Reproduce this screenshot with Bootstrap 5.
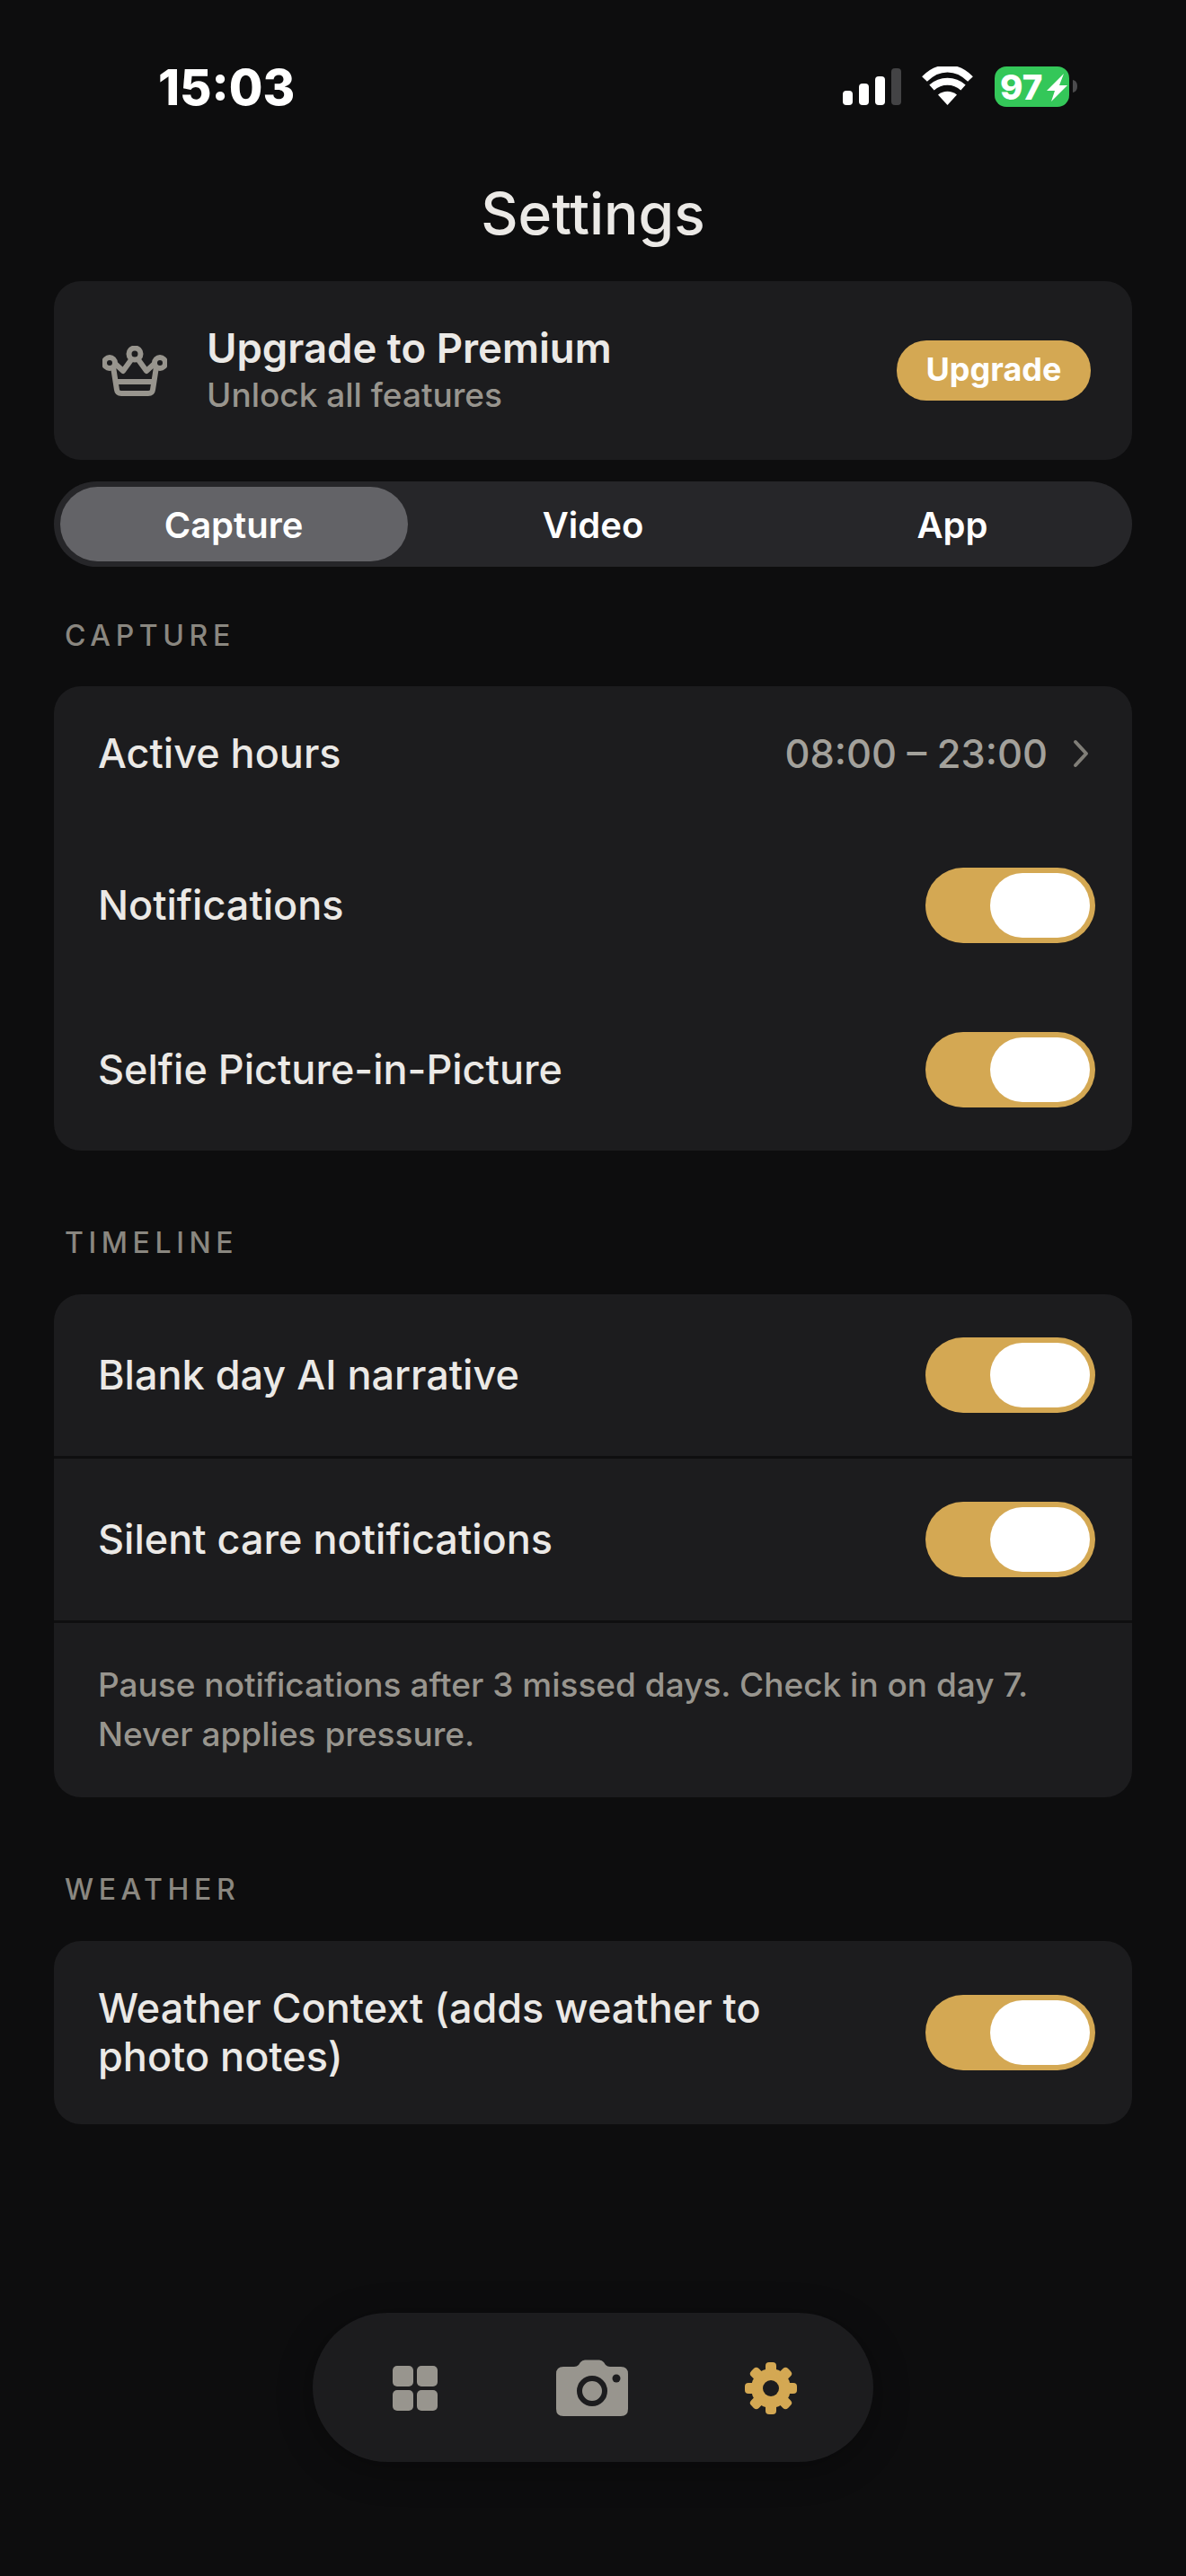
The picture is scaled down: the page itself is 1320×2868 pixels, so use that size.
<!doctype html>
<html lang="en"><head><meta charset="utf-8"><title>Settings</title>
<link href="https://cdn.jsdelivr.net/npm/bootstrap@5.3.0/dist/css/bootstrap.min.css" rel="stylesheet">
<style>
html,body{background:#0d0d0e;}
body{font-family:Inter,"Liberation Sans",sans-serif;color:#ebe9e6;width:1320px;height:2868px;overflow:hidden;}
.scr{padding:0 60px;}
.stat{height:190px;padding:0 0 0 116px;margin:0 -60px 0 0;}
.clock{font-size:54.5px;font-weight:800;color:#fff;line-height:64px;margin-top:65px;}
.staticons{margin:74px 120px 0 0;}
.ttl{font-size:64px;font-weight:500;line-height:76px;text-align:center;margin:10px 0 37px;}
.sheet{background:#1c1c1e;border-radius:30px;}
.promo{height:199px;padding:0 46px 0 54px;gap:44px;margin-bottom:24px;}
.pname{font-size:45.5px;font-weight:600;line-height:56px;margin-top:-2px;}
.psub{font-size:37px;font-weight:500;color:#98958e;line-height:46px;margin-top:1px;}
.ubtn{background:#d4a853;color:#fff;border:0;border-radius:33px;width:216px;height:67px;font-size:36px;font-weight:700;padding:0 0 2px;margin-top:-1px;}
.seg{height:95px;border-radius:48px;background:#262629;padding:6px 0;}
.segi{flex:1 1 0;padding:0 6.500px;display:flex;}
.segb{flex:1;border:0;background:none;color:#fff;font-size:40px;font-weight:600;border-radius:42px;padding:2px 0 0;}
.segb.on{background:#636367;}
.cap{font-size:32px;font-weight:500;letter-spacing:5.6px;color:#8a8780;line-height:40px;padding-left:12px;margin:83px 0 37px;}
.cap.first{margin-top:57px;margin-bottom:36px;}
.rw{padding:48px 41px 48px 49px;}
.rw.hrs{padding:48px 48px 49px 49px;}
.rw.lbl{min-height:180px;}
.rw.sep{border-top:3px solid #0f0f10;}
.rw.quiet{border-top:3px solid #1c1c1e;}
.rt{font-size:45px;font-weight:500;line-height:54px;}
.rv{font-size:43.4px;font-weight:500;color:#a3a19b;line-height:54px;}
.sw{width:189px;height:84px;border-radius:42px;background:#d4a853;padding:6px;flex:none;display:flex;justify-content:flex-end;}
.knob{width:111px;height:72px;border-radius:36px;background:#fff;}
.nt{font-size:37px;font-weight:500;color:#98958e;line-height:55px;padding:41px 49px 43px;border-top:3px solid #0f0f10;}
.dock{width:624px;height:166px;border-radius:83px;background:#1c1c1e;margin:210px auto 0;padding:2px 85px 0 88px;box-shadow:0 8px 40px rgba(0,0,0,.3);}
svg{display:block;flex:none;}
</style></head>
<body>
<div class="scr">
  <div class="stat d-flex justify-content-between align-items-start">
    <div class="clock">15:03</div>
    <div class="staticons d-flex align-items-start" >
      <svg width="262" height="46" viewBox="0 0 262 46">
        <g transform="translate(-937,-74)">
          <rect x="937" y="101" width="11" height="16" rx="4" fill="#fff"/>
          <rect x="955" y="93" width="11" height="24" rx="4" fill="#fff"/>
          <rect x="973" y="85" width="11" height="32" rx="4" fill="#fff"/>
          <rect x="991" y="76" width="11" height="41" rx="4" fill="#434345"/>
          <path d="M1053.5 117 L1043 105.5 C1049 100.5 1058 100.5 1064 105.5 Z" fill="#fff"/>
          <path d="M1036 97.5 C1046 88.5 1061 88.5 1071 97.5" fill="none" stroke="#fff" stroke-width="8"/>
          <path d="M1028 88 C1043 72.5 1064 72.5 1079 88" fill="none" stroke="#fff" stroke-width="8" />
          <rect x="1106" y="74" width="83" height="45" rx="13" fill="#34c759"/>
          <path d="M1193 89 C1197 90 1198 93 1198 96 C1198 99 1197 102 1193 103 Z" fill="#4b4b4d"/>
          <text x="1112" y="111" font-family="Inter,sans-serif" font-weight="800" font-size="38.500" fill="#fff">97</text>
          <path d="M1183 82 L1164 101 L1173 101 L1169 113 L1187 95 L1178 95 Z" fill="#fff"/>
        </g>
      </svg>
    </div>
  </div>
  <div class="ttl">Settings</div>

  <div class="sheet promo d-flex align-items-center">
    <svg width="72" height="56" viewBox="0 0 72 56" fill="none" stroke="#98958e" stroke-width="6" stroke-linejoin="round" stroke-linecap="round">
      <path d="M11 17 L16 49 Q16.500 53 21 53 L51 53 Q55.500 53 56 49 L61 17 L49 28 L36 10 L23 28 Z"/>
      <path d="M15 40 H57"/>
      <circle cx="36" cy="9" r="6.500" fill="#1c1c1e"/>
      <circle cx="8" cy="19" r="6" fill="#1c1c1e"/>
      <circle cx="64" cy="19" r="6" fill="#1c1c1e"/>
    </svg>
    <div class="flex-grow-1">
      <div class="pname">Upgrade to Premium</div>
      <div class="psub">Unlock all features</div>
    </div>
    <button class="ubtn" type="button">Upgrade</button>
  </div>

  <div class="seg d-flex">
    <div class="segi"><button class="segb on" type="button">Capture</button></div>
    <div class="segi"><button class="segb" type="button">Video</button></div>
    <div class="segi"><button class="segb" type="button">App</button></div>
  </div>

  <div class="cap first">CAPTURE</div>
  <div class="sheet">
    <div class="rw hrs d-flex justify-content-between align-items-center">
      <div class="rt">Active hours</div>
      <div class="d-flex align-items-center gap-4">
        <span class="rv">08:00 – 23:00</span>
        <svg class="ms-1" width="18" height="32" viewBox="0 0 18 32" fill="none" stroke="#807e78" stroke-width="4" stroke-linecap="round" stroke-linejoin="round"><path d="M3 3 L15 16 L3 29"/></svg>
      </div>
    </div>
    <div class="rw lbl quiet d-flex justify-content-between align-items-center"><div class="rt">Notifications</div><div class="sw"><div class="knob"></div></div></div>
    <div class="rw lbl quiet d-flex justify-content-between align-items-center"><div class="rt">Selfie Picture-in-Picture</div><div class="sw"><div class="knob"></div></div></div>
  </div>

  <div class="cap">TIMELINE</div>
  <div class="sheet">
    <div class="rw lbl d-flex justify-content-between align-items-center"><div class="rt">Blank day AI narrative</div><div class="sw"><div class="knob"></div></div></div>
    <div class="rw lbl sep d-flex justify-content-between align-items-center"><div class="rt">Silent care notifications</div><div class="sw"><div class="knob"></div></div></div>
    <div class="nt">Pause notifications after 3 missed days. Check in on day 7.<br>Never applies pressure.</div>
  </div>

  <div class="cap">WEATHER</div>
  <div class="sheet">
    <div class="rw d-flex justify-content-between align-items-center">
      <div class="rt">Weather Context (adds weather to<br>photo notes)</div>
      <div class="sw"><div class="knob"></div></div>
    </div>
  </div>

  <div class="dock d-flex justify-content-between align-items-center">
    <svg width="52" height="52" viewBox="0 0 52 52" fill="#98958e"><rect x="1" y="1" width="23" height="23" rx="5"/><rect x="28" y="1" width="23" height="23" rx="5"/><rect x="1" y="28" width="23" height="23" rx="5"/><rect x="28" y="28" width="23" height="23" rx="5"/></svg>
    <svg width="80" height="64" viewBox="0 0 80 64"><path fill="#98958e" d="M8 8 H20 Q23 8 25 6 L27 3 Q29 0.500 32 0.500 H48 Q51 0.500 53 3 L55 6 Q57 8 60 8 H72 Q80 8 80 16 V55 Q80 63 72 63 H8 Q0 63 0 55 V16 Q0 8 8 8 Z"/><circle cx="40" cy="35" r="14" fill="none" stroke="#1c1c1e" stroke-width="6"/><circle cx="67" cy="21" r="4.500" fill="#1c1c1e"/></svg>
    <svg width="58" height="58" viewBox="0 0 58 58"><g fill="#d4a853"><circle cx="29" cy="29" r="22"/><g><rect x="23" y="0" width="12" height="16" rx="4"/><rect x="23" y="42" width="12" height="16" rx="4"/></g><g transform="rotate(45 29 29)"><rect x="23" y="0" width="12" height="16" rx="4"/><rect x="23" y="42" width="12" height="16" rx="4"/></g><g transform="rotate(90 29 29)"><rect x="23" y="0" width="12" height="16" rx="4"/><rect x="23" y="42" width="12" height="16" rx="4"/></g><g transform="rotate(135 29 29)"><rect x="23" y="0" width="12" height="16" rx="4"/><rect x="23" y="42" width="12" height="16" rx="4"/></g></g><circle cx="29" cy="29" r="9" fill="#1c1c1e"/></svg>
  </div>
</div>
<script src="https://cdn.jsdelivr.net/npm/bootstrap@5.3.0/dist/js/bootstrap.bundle.min.js"></script>
</body></html>
